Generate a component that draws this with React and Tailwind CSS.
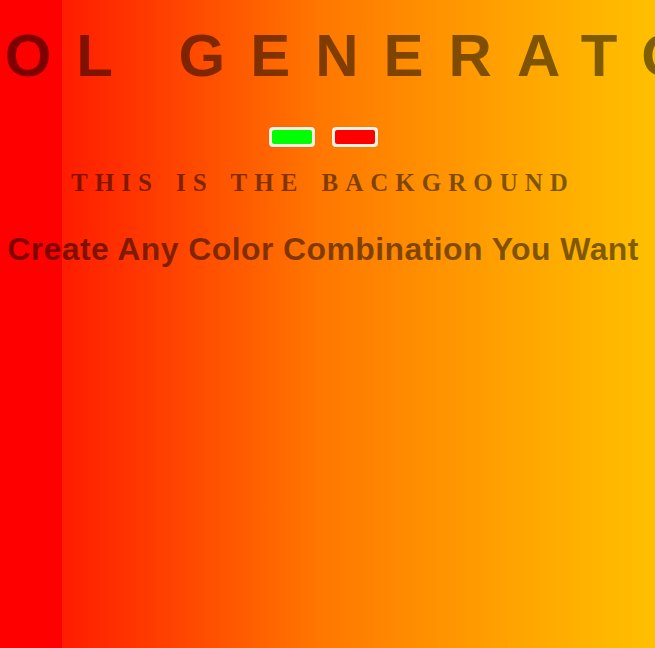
import React, { useState } from "react";

const Swatch = ({ color }) => (
  <div className="w-[46px] h-[20px] p-[3px] rounded-[4px] bg-white/90 shadow-[0_0_1px_rgba(0,0,0,0.2)]">
    <div className="w-full h-full rounded-[2px]" style={{ backgroundColor: color }} />
  </div>
);

const App = () => {
  const [colors] = useState(["#00ff00", "#ff0000"]);

  return (
    <div className="min-h-screen w-full overflow-hidden bg-[linear-gradient(to_right,#ff0000_0px,#ff0000_62px,#ff1c00_62px,#ff4c00_200px,#ff7700_320px,#ffa200_505px,#ffc000_100%)]">
      <div className="flex flex-col items-center pr-[9px]">
        {/* Title */}
        <div className="w-full flex justify-center mt-[26px]">
          <h1 className="shrink-0 whitespace-nowrap text-[60px] leading-[60px] font-bold tracking-[25px] text-black/50 font-['Liberation_Sans',Arial,sans-serif]">
            COOL GENERATOR
          </h1>
        </div>

        {/* Color pickers */}
        <div className="flex gap-[17px] mt-[41px]">
          {colors.map((c) => (
            <Swatch key={c} color={c} />
          ))}
        </div>

        <h3 className="mt-[24px] text-[25px] leading-[24px] font-bold tracking-[7px] [word-spacing:4px] text-black/50 font-['Liberation_Serif','Times_New_Roman',serif]">
          THIS IS THE BACKGROUND
        </h3>

        <h2 className="mt-[38px] text-[32px] leading-[32px] font-bold tracking-[0.4px] text-black/50 whitespace-nowrap font-['Liberation_Sans',Arial,sans-serif]">
          Create Any Color Combination You Want
        </h2>
      </div>
    </div>
  );
};

export default App;
